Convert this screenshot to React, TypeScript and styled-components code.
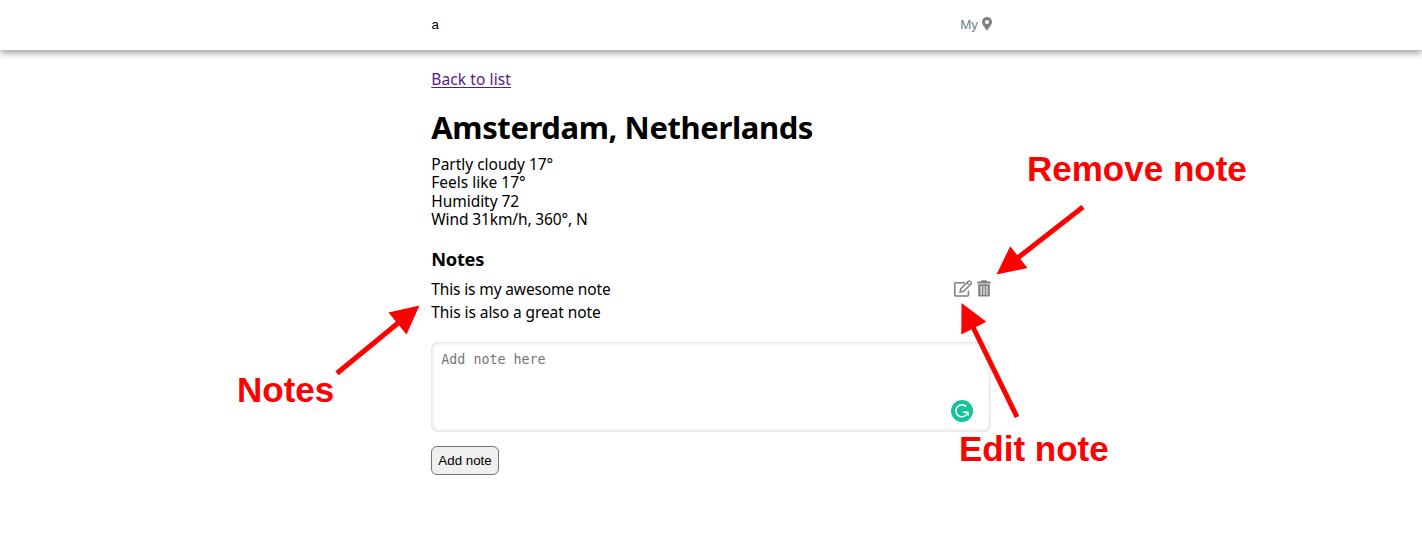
import React from "react";
import styled, { createGlobalStyle } from "styled-components";

const GlobalStyle = createGlobalStyle`
  * { box-sizing: border-box; }
  body { margin: 0; background: #fff; color: #000; font-family: "Noto Sans", sans-serif; font-size: 16px; }
`;

const Page = styled.div`
  position: relative;
  height: 558px;
  overflow: hidden;
`;

const Header = styled.header`
  height: 50px;
  padding-left: 1px;
  display: flex;
  justify-content: center;
  box-shadow: 0 3px 7px rgba(0, 0, 0, 0.38);
`;

const HeaderInner = styled.div`
  width: 560px;
  height: 48px;
  display: flex;
  align-items: center;
  justify-content: space-between;
  font: 13.333px "Liberation Sans", sans-serif;
`;

const MyLocation = styled.div`
  display: flex;
  align-items: center;
  gap: 3.5px;
  color: slategray;
`;

const Content = styled.div`
  padding-left: 0.6px;
`;

const Main = styled.main`
  width: 560px;
  margin: 0 auto;
  padding-top: 20px;
  display: flex;
  flex-direction: column;
  align-items: flex-start;
`;

const BackLink = styled.a`
  color: #551a8b;
  line-height: 18px;
  font-size: 15.5px;
  letter-spacing: 0.1px;
  text-decoration: underline;
  text-decoration-thickness: 1px;
  text-underline-offset: 2px;
`;

const Title = styled.h1`
  margin: 21px 0 9px;
  font-size: 31px;
  line-height: 37px;
  letter-spacing: -0.4px;
  white-space: nowrap;
`;

const Line = styled.div<{ $spacing?: number }>`
  font-size: 15.5px;
  line-height: 18.4px;
  letter-spacing: ${(p) => p.$spacing ?? -0.12}px;
  white-space: nowrap;
`;

const Subtitle = styled.h3`
  margin: 19px 0 8.5px;
  font-size: 18.3px;
  line-height: 21px;
  letter-spacing: -0.3px;
`;

const Note = styled.div`
  width: 100%;
  height: 23.5px;
  display: flex;
  align-items: center;
  justify-content: space-between;
`;

const Actions = styled.div`
  display: flex;
  gap: 4.5px;
  padding-bottom: 1px;
  color: gray;
`;

const Field = styled.div`
  position: relative;
  width: 560px;
  height: 90px;
  margin-top: 17.5px;
`;

const NoteInput = styled.textarea`
  display: block;
  width: 100%;
  height: 100%;
  padding: 10px;
  border: 0;
  border-radius: 7px;
  resize: none;
  box-shadow: inset 0 0 4px rgba(0, 0, 0, 0.22);
  font: 13.333px "DejaVu Sans Mono", monospace;
  &::placeholder { color: #757575; }
`;

const Badge = styled.svg`
  position: absolute;
  right: 18.2px;
  bottom: 10px;
`;

const AddButton = styled.button`
  width: 67.5px;
  height: 29px;
  margin-top: 14px;
  padding: 0;
  border: 1px solid #767676;
  border-radius: 6px;
  background: #efefef;
  color: #000;
  font: 13.333px "Liberation Sans", sans-serif;
`;

const Arrows = styled.svg`
  position: absolute;
  inset: 0;
  pointer-events: none;
`;

const Callout = styled.div<{ $x: number; $y: number }>`
  position: absolute;
  left: ${(p) => p.$x}px;
  top: ${(p) => p.$y}px;
  color: #f00;
  font: bold 35px/40px "Liberation Sans", sans-serif;
  white-space: nowrap;
`;

const PinIcon = () => (
  <svg width="10" height="13.3" viewBox="0 0 384 512" fill="gray">
    <path d="M172 502C27 291 0 270 0 192a192 192 0 1 1 384 0c0 78-27 99-172 310a24 24 0 0 1-40 0zM192 272a80 80 0 1 0 0-160 80 80 0 0 0 0 160z" />
  </svg>
);

const EditIcon = () => (
  <svg width="19" height="17" viewBox="0 0 19 17" fill="none" stroke="currentColor" strokeWidth="1.5">
    <path d="M11 2.8H1.5a.7.7 0 0 0-.7.7v11.8a.7.7 0 0 0 .7.7h12.2a.7.7 0 0 0 .7-.7V10.5" />
    <path d="M6 12.1l.8-3.4 7.4-7.3q.9-.8 1.8 0l1.1 1q.8.9 0 1.7l-7.5 7.2zM13 2.7l2.8 2.7" strokeWidth="1.4" />
  </svg>
);

const TrashIcon = () => (
  <svg width="14" height="17" viewBox="0 0 14 17" fill="currentColor">
    <path d="M.3 1.5h4V.3h5.4v1.2h4v2H.3z" />
    <path fillRule="evenodd" d="M1.2 4.3h11.6v11.5q0 .8-.8.8H2q-.8 0-.8-.8zM3.6 5.9v9h1.1v-9zM6.5 5.9v9h1.1v-9zM9.4 5.9v9h1.1v-9z" />
  </svg>
);

const weather = [
  { text: "Partly cloudy 17°", spacing: -0.02 },
  { text: "Feels like 17°", spacing: 0 },
  { text: "Humidity 72", spacing: -0.05 },
  { text: "Wind 31km/h, 360°, N", spacing: -0.12 },
];

export default function App() {
  return (
    <Page>
      <GlobalStyle />
      <Header>
        <HeaderInner>
          <span>a</span>
          <MyLocation>My <PinIcon /></MyLocation>
        </HeaderInner>
      </Header>
      <Content>
        <Main>
          <BackLink href="#">Back to list</BackLink>
          <Title>Amsterdam, Netherlands</Title>
          {weather.map((w) => <Line key={w.text} $spacing={w.spacing}>{w.text}</Line>)}
          <Subtitle>Notes</Subtitle>
          <Note>
            <Line $spacing={-0.14}>This is my awesome note</Line>
            <Actions><EditIcon /><TrashIcon /></Actions>
          </Note>
          <Note><Line $spacing={-0.08}>This is also a great note</Line></Note>
          <Field>
            <NoteInput placeholder="Add note here" />
            <Badge width="22" height="22" viewBox="0 0 22 22">
              <circle cx="11" cy="11" r="11" fill="#15c39a" />
              <path d="M15.2 6.6A6 6 0 1 0 15.6 14.6M11.8 12.3H16" fill="none" stroke="#fff" strokeWidth="1.5" />
              <path d="M13 11.6h4.7v4.9z" fill="#fff" />
            </Badge>
          </Field>
          <AddButton>Add note</AddButton>
        </Main>
      </Content>
      <Arrows width="1422" height="558" fill="#f00" stroke="none">
        <path d="M996.5 274.5L1010.2 246.3L1027.5 268Z" />
        <path d="M961.5 303L986.3 321.8L961.3 334.5Z" />
        <path d="M419.5 305.5L406.5 334.5L388.5 312.5Z" />
        <g stroke="#f00" strokeWidth="5">
          <path d="M1083 207L1015 260" />
          <path d="M1017 417L972 325" />
          <path d="M337 373.3L400 321.5" />
        </g>
      </Arrows>
      <Callout $x={1027} $y={149}>Remove note</Callout>
      <Callout $x={959} $y={429}>Edit note</Callout>
      <Callout $x={237} $y={370}>Notes</Callout>
    </Page>
  );
}
